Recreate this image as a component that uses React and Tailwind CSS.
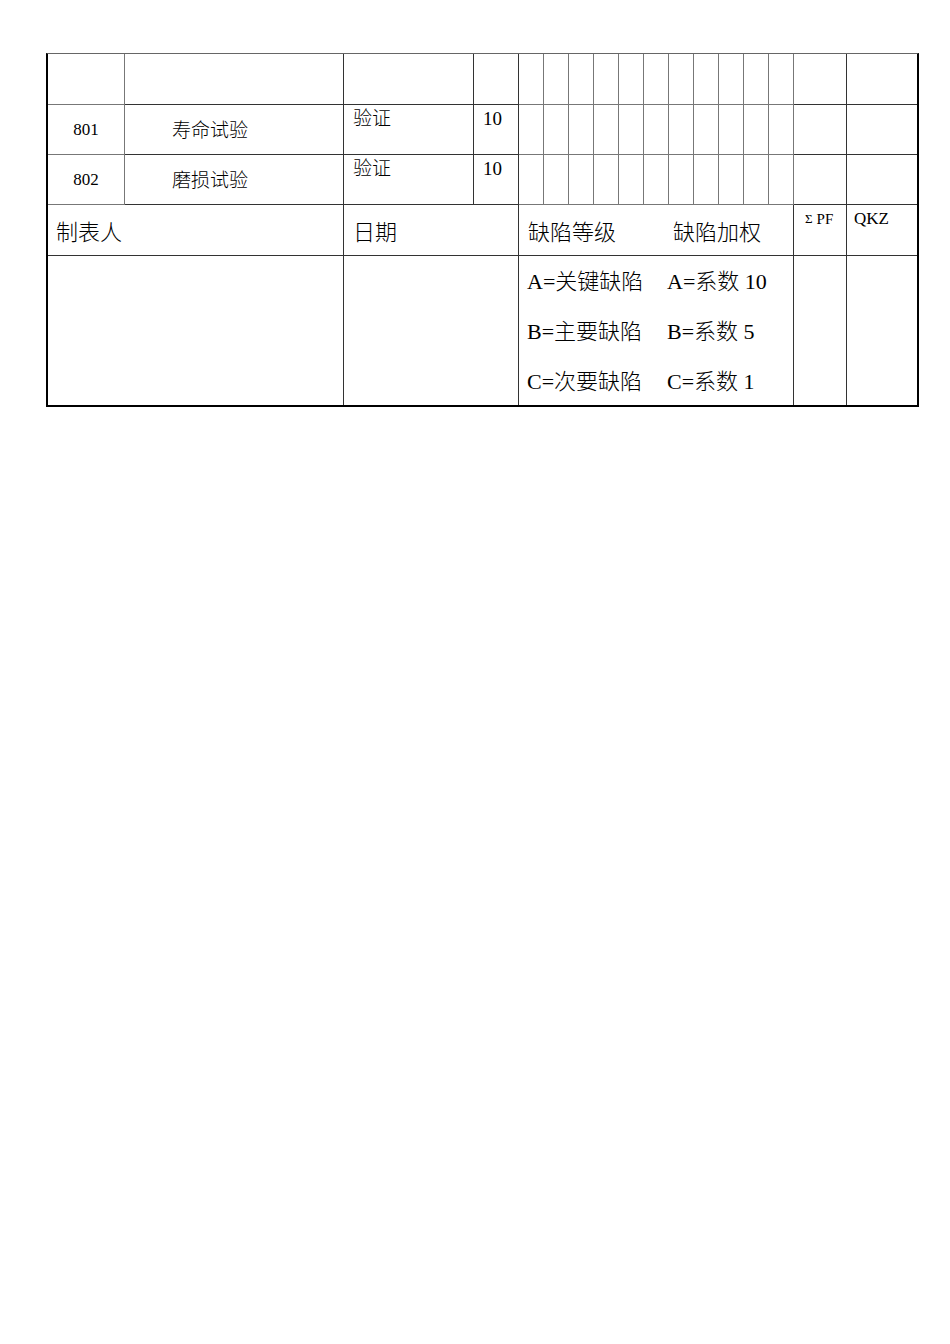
import React from "react";

const small = Array.from({ length: 11 });

const Cell = ({ last, bottom, light, className = "", children }) => (
  <div
    className={`${last ? "" : "border-r"} ${bottom ? "" : "border-b"} ${
      light ? "border-[#777]" : "border-[#333]"
    } ${className}`}
  >
    {children}
  </div>
);

const ItemRow = ({ no, name, method, score }) => (
  <>
    <Cell light className="flex items-center justify-center text-[17px]">
      {no}
    </Cell>
    <Cell className="flex items-center pl-[47px] pt-[3px] text-[19px]">{name}</Cell>
    <Cell className="pl-[9px] pt-[2px] text-[19px] leading-[24px]">{method}</Cell>
    <Cell className="pl-[9px] pt-[2px] text-[19px] leading-[24px]">{score}</Cell>
    {small.map((_, i) => (
      <Cell key={i} light />
    ))}
    <Cell />
    <Cell last />
  </>
);

const App = () => {
  return (
    <div className="min-h-[1344px] bg-white pt-[53px] font-['Liberation_Serif','Noto_Sans_CJK_SC',serif] font-light text-black">
      <div className="ml-[46px] w-[873px] border-t border-r-2 border-b-2 border-l-2 border-t-[#666] border-r-black border-b-black border-l-black">
        <div className="grid grid-cols-[77px_219px_130px_45px_repeat(11,25px)_53px_70px] grid-rows-[51px_50px_50px_51px_149px]">
          {/* empty first row */}
          <Cell light />
          <Cell />
          <Cell />
          <Cell />
          {small.map((_, i) => (
            <Cell key={i} light />
          ))}
          <Cell />
          <Cell last />

          <ItemRow no="801" name="寿命试验" method="验证" score="10" />
          <ItemRow no="802" name="磨损试验" method="验证" score="10" />

          {/* footer */}
          <Cell className="col-span-2 flex items-center pl-2 pt-1 text-[22px]">制表人</Cell>
          <Cell className="col-span-2 flex items-center pl-[9px] pt-1 text-[22px]">日期</Cell>
          <Cell className="col-span-11 flex items-center pl-[9px] pt-1 text-[22px]">
            <span className="inline-block w-[145px]">缺陷等级</span>
            <span>缺陷加权</span>
          </Cell>
          <Cell className="pl-[11px] pt-[5px] text-[15px] leading-[18px]">
            <span className="mr-[4px] align-[1px] text-[13px]">Σ</span>PF
          </Cell>
          <Cell last className="pl-[7px] pt-[4px] text-[17px] leading-[20px]">QKZ</Cell>

          <Cell bottom className="col-span-2" />
          <Cell bottom className="col-span-2" />
          <Cell bottom className="col-span-11 pl-2 pt-px text-[22px] leading-[50px]">
            <div>
              <span className="inline-block w-[140px]">A=关键缺陷</span>A=系数 10
            </div>
            <div>
              <span className="inline-block w-[140px]">B=主要缺陷</span>B=系数 5
            </div>
            <div>
              <span className="inline-block w-[140px]">C=次要缺陷</span>C=系数 1
            </div>
          </Cell>
          <Cell bottom />
          <Cell bottom last />
        </div>
      </div>
    </div>
  );
};

export default App;
